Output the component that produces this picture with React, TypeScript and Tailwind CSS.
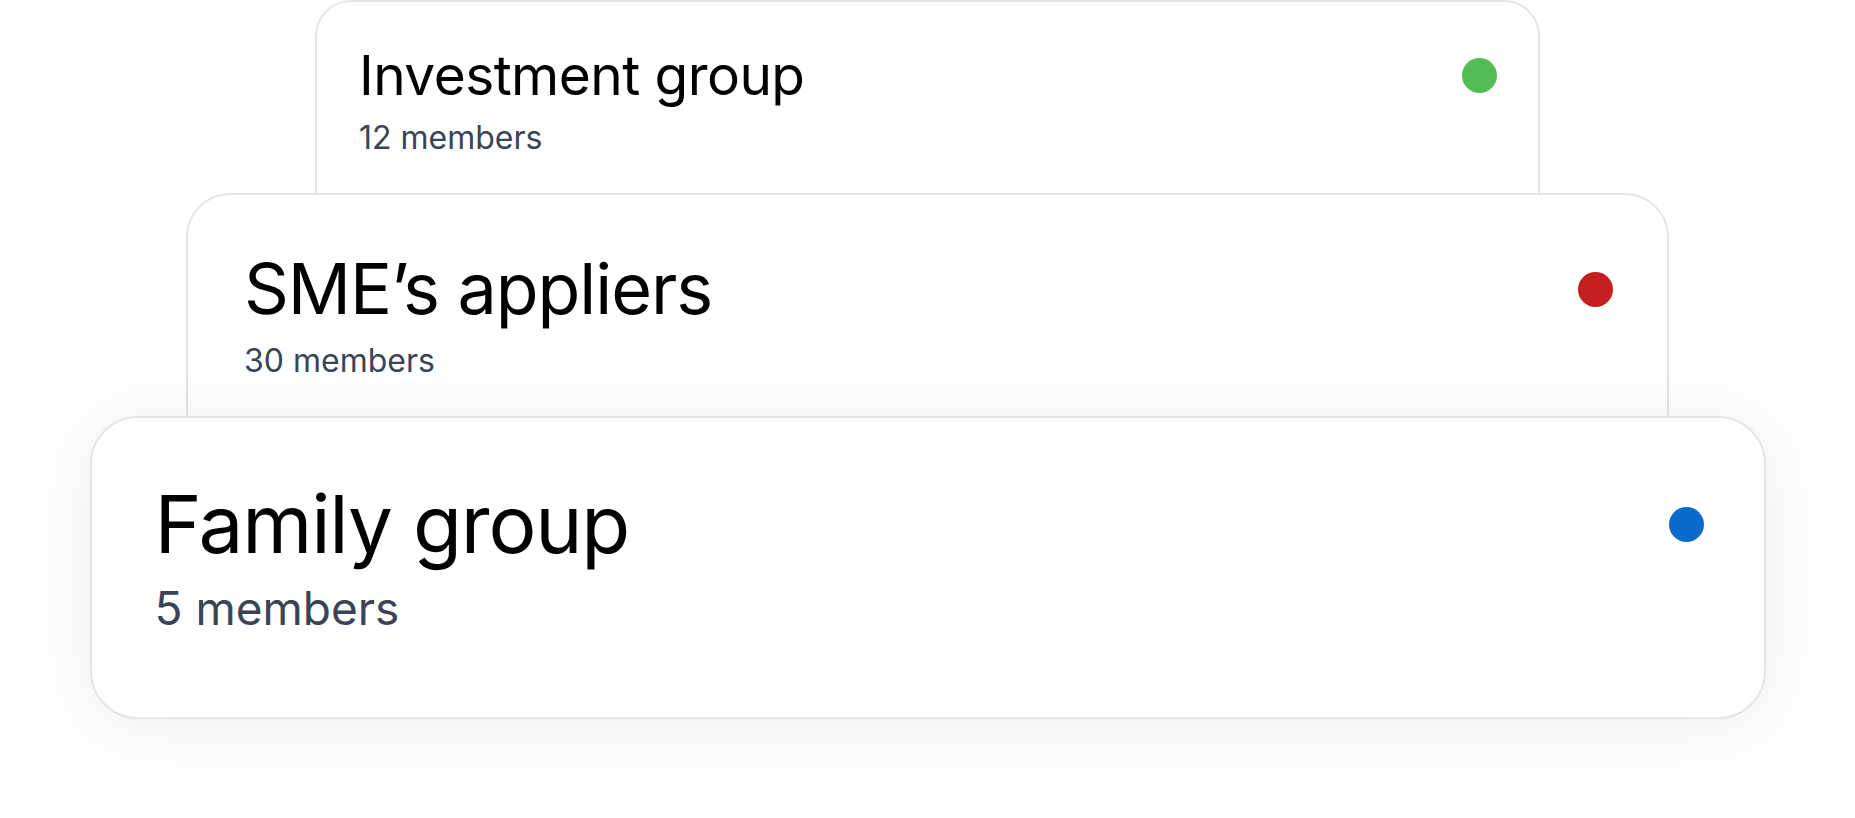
export default function App() {
  const font = { fontFamily: '"Inter", "Noto Sans", sans-serif' };

  return (
    <div className="w-full h-[818px] bg-white overflow-hidden flex flex-col items-center" style={font}>
      {/* back card */}
      <div className="w-[1225px] h-[232px] shrink-0 bg-white border-2 border-[#e5e5e5] rounded-[36px] pl-[42px] pr-[41px] pt-[40px]">
        <div className="flex items-center justify-between">
          <h2 className="text-[55px] leading-[1.2] font-normal text-black tracking-[-0.01em]">Investment group</h2>
          <span className="w-[35px] h-[35px] rounded-full bg-[#52bd53]" />
        </div>
        <p className="mt-[11px] text-[32px] leading-[1.2] text-[#3b4456]">12 members</p>
      </div>

      {/* middle card */}
      <div className="w-[1483px] h-[262px] shrink-0 -mt-[39px] bg-white border-2 border-[#e5e5e5] rounded-[44px] pl-[56px] pr-[54px] pt-[52px]">
        <div className="flex items-center justify-between">
          <h2 className="text-[70px] leading-[1.2] font-normal text-black tracking-[-0.015em]">SME’s appliers</h2>
          <span className="w-[35px] h-[35px] rounded-full bg-[#c41e1e]" />
        </div>
        <p className="mt-[11px] text-[32px] leading-[1.2] text-[#3b4456]">30 members</p>
      </div>

      {/* front card */}
      <div className="w-[1676px] h-[303px] shrink-0 -mt-[39px] bg-white border-2 border-[#e5e5e5] rounded-[48px] pl-[63px] pr-[60px] pt-[58px] shadow-[0_6px_70px_rgba(0,0,0,0.08)]">
        <div className="flex items-center justify-between">
          <h2 className="text-[80px] leading-[1.2] font-normal text-black tracking-[-0.015em]">Family group</h2>
          <span className="w-[35px] h-[35px] rounded-full bg-[#0b6bcb]" />
        </div>
        <p className="mt-[9px] text-[46px] leading-[1.2] text-[#3b4456]">5 members</p>
      </div>
    </div>
  );
}
